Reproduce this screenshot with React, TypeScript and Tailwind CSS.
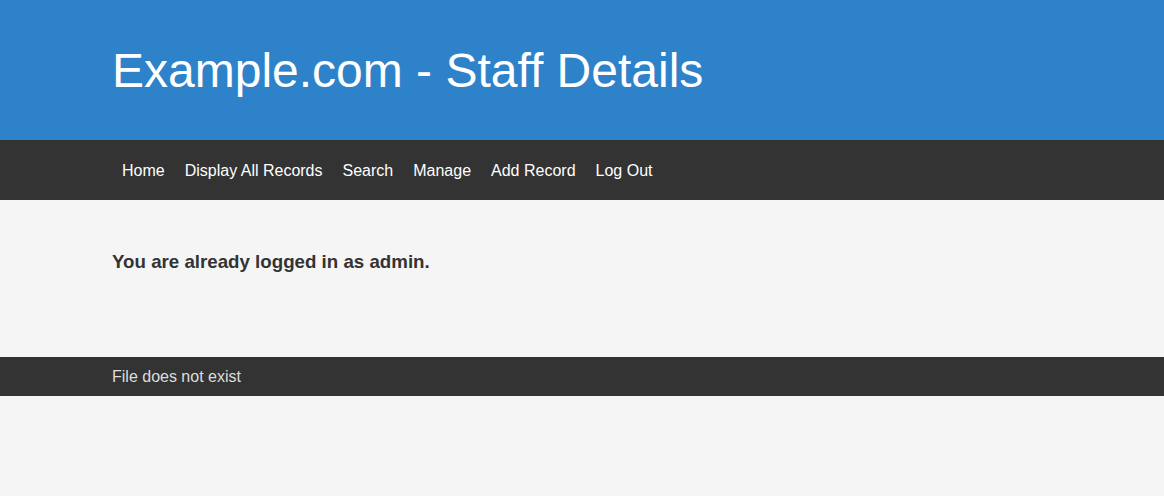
export default function App() {
  const links = ["Home", "Display All Records", "Search", "Manage", "Add Record", "Log Out"];
  return (
    <div className="min-h-[496px] bg-[#f5f5f5] font-['Liberation_Sans',Arial,sans-serif]">
      <header className="h-[140px] bg-[#2e82c9] flex items-center">
        <div className="w-[940px] mx-auto">
          <h1 className="text-[48px] leading-[56px] pt-[2px] text-white font-normal">Example.com - Staff Details</h1>
        </div>
      </header>
      <nav className="h-[60px] bg-[#333333] flex items-center">
        <div className="w-[940px] mx-auto flex pt-[2px]">
          {links.map((l) => (
            <a key={l} href="#" className="px-[10px] text-[16px] leading-[20px] text-white">
              {l}
            </a>
          ))}
        </div>
      </nav>
      <main className="h-[157px]">
        <div className="w-[940px] mx-auto pt-[51px]">
          <h3 className="text-[18.72px] leading-[22px] font-bold text-[#333333]">You are already logged in as admin.</h3>
        </div>
      </main>
      <footer className="h-[39px] bg-[#333333] flex items-center">
        <div className="w-[940px] mx-auto">
          <p className="text-[16px] leading-[20px] text-[#dddddd]">File does not exist</p>
        </div>
      </footer>
    </div>
  );
}
